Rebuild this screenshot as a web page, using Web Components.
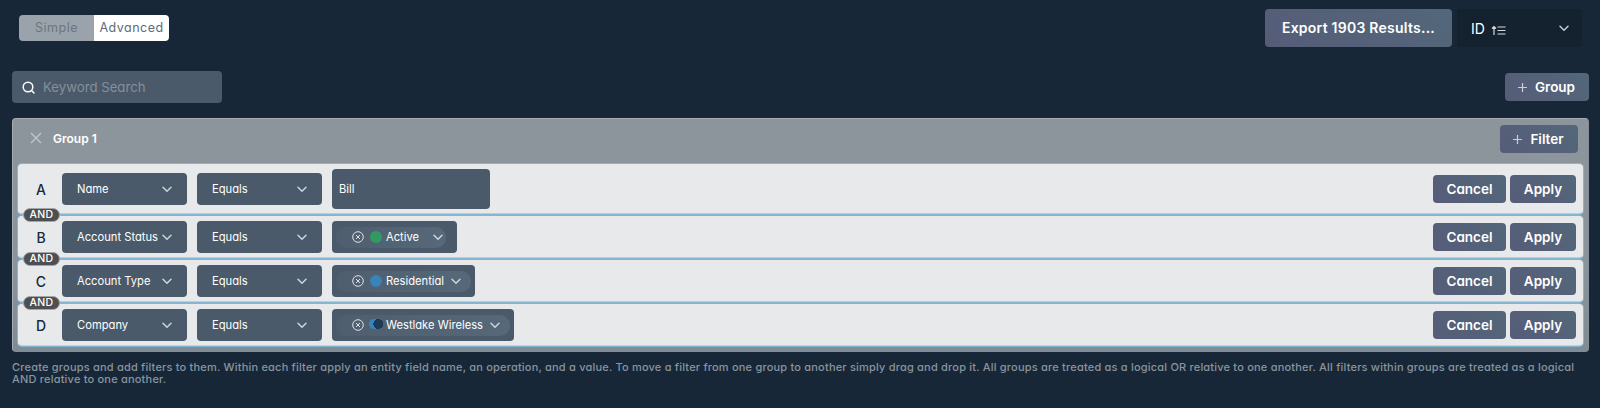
<!DOCTYPE html>
<html><head><meta charset="utf-8"><style>
html,body{margin:0;height:408px;overflow:hidden;background:#172738}
body{font-family:Inter,"Liberation Sans",sans-serif;font-feature-settings:"cv11";color:#fff}
</style></head><body>
<app-shell>
  <div slot="top-left"><mode-toggle></mode-toggle></div>
  <top-actions slot="top-right"></top-actions>
  <search-box slot="search-left"></search-box>
  <ui-button slot="search-right" plus h="28" w="84">Group</ui-button>
  <filter-group>
    <filter-row letter="A" field="Name"><plain-value>Bill</plain-value></filter-row>
    <filter-row letter="B" field="Account Status" and><chip-value dot="green" w="125" mr="7" pr="1">Active</chip-value></filter-row>
    <filter-row letter="C" field="Account Type" and><chip-value dot="blue" w="143" mr="0" pr="8">Residential</chip-value></filter-row>
    <filter-row letter="D" field="Company" and><chip-value dot="moon" w="182" mr="0" pr="8">Westlake Wireless</chip-value></filter-row>
  </filter-group>
  <p slot="help">Create groups and add filters to them. Within each filter apply an entity field name, an operation, and a value. To move a filter from one group to another simply drag and drop it. All groups are treated as a logical OR relative to one another. All filters within groups are treated as a logical AND relative to one another.</p>
</app-shell>
<script>
const chev=(c='#fff',s=14)=>`<svg width="${s}" height="${s}" viewBox="0 0 14 14" fill="none" stroke="${c}" stroke-width="1.5" stroke-linecap="round" stroke-linejoin="round"><path d="M3 5.200l4 4 4-4"/></svg>`;
function def(name,fn){customElements.define(name,class extends HTMLElement{connectedCallback(){if(this.shadowRoot)return;const r=this.attachShadow({mode:'open'});r.innerHTML=fn(this)}})}
def('app-shell',()=>`<style>:host{display:flex;flex-direction:column;padding:9px 11px 0 12px;box-sizing:border-box;height:408px}
.top{display:flex;justify-content:space-between;height:38px;padding-left:7px}
.mid{display:flex;justify-content:space-between;align-items:center;margin-top:24px;height:32px}
.help ::slotted(p){margin:0;font-size:11px;line-height:12px;color:#8a949d;letter-spacing:.2px;font-weight:500}
.help{margin-top:9px;}
.group{margin-top:15px}</style>
<div class="top"><slot name="top-left"></slot><slot name="top-right"></slot></div>
<div class="mid"><slot name="search-left"></slot><slot name="search-right"></slot></div>
<div class="group"><slot></slot></div>
<div class="help"><slot name="help"></slot></div>`);
def('mode-toggle',()=>`<style>:host{display:flex;margin-top:6px;height:26px;width:150px;border-radius:4px;overflow:hidden;font-size:12.5px;letter-spacing:.5px;line-height:25px;text-align:center}
.a{flex:1;background:#9aa3ab;color:#6c7680}.b{flex:1;background:#fff;color:#5c6b7c}</style>
<div class="a">Simple</div><div class="b">Advanced</div>`);
def('top-actions',()=>`<style>:host{display:flex;gap:5px;margin-right:7px}
.e{width:187px;height:38px;border-radius:4px;background:linear-gradient(45deg,#565c78,#53677a);font-weight:600;font-size:14px;line-height:37px;text-align:center;letter-spacing:.24px}
.s{width:125px;height:38px;border-radius:4px;background:#14212e;display:flex;align-items:center;padding:0 11px 0 14px;box-sizing:border-box;font-size:14px}
.s svg.o{margin-left:6px;margin-top:3px}.s .c{margin-left:auto;display:flex}</style>
<div class="e">Export 1903 Results...</div>
<div class="s"><span>ID</span><svg class="o" width="15" height="12" viewBox="0 0 15 12" fill="none" stroke="#d5d9dd" stroke-width="1.200"><path d="M3 11V3M1 4.500L3 2.500 5 4.500M6.500 3h8M6.500 6.500h8M6.500 10h8"/></svg><span class="c">${chev('#c5ccd2')}</span></div>`);
def('search-box',()=>`<style>:host{display:flex;align-items:center;width:210px;height:32px;border-radius:4px;background:#4a5a6a;box-sizing:border-box;padding-left:10px;gap:8px;font-size:13.2px;color:#868f99}</style>
<svg width="13" height="13" viewBox="0 0 13 13" fill="none" stroke="#fff" stroke-width="1.500" stroke-linecap="round"><circle cx="6" cy="6" r="4.800"/><path d="M9.500 9.500L12 12"/></svg><span>Keyword Search</span>`);
def('ui-button',el=>{const h=el.getAttribute('h')||28,w=el.getAttribute('w');const p=el.hasAttribute('plus');return `<style>:host{display:flex;align-items:center;justify-content:center;gap:7px;height:${h}px;width:${w}px;box-sizing:border-box;padding-right:${p?2:0}px;border-radius:4px;background:linear-gradient(45deg,#565c78,#53677a);font-weight:600;font-size:13.500px;color:#fff;flex:none}</style>
${p?'<svg width="11" height="11" viewBox="0 0 11 11" stroke="#ccd0d6" stroke-width="1.200"><path d="M5.500 1v9M1 5.500h9"/></svg>':''}<slot></slot>`});
def('filter-group',()=>`<style>:host{display:block;height:234px;box-sizing:border-box;border-radius:4px;background:linear-gradient(#8d959c 0,#8d959c 30px,#8b949b 60%,#7f8b95);border:1px solid #a5acb2;border-bottom-color:#858d95;border-right-color:#858d95;padding:0 5px}
.h{display:flex;align-items:center;height:40px;margin-bottom:5px;font-weight:600;font-size:12px;padding-left:12px}
.h span{margin-left:11px;margin-top:-2px}.h svg{margin-top:-2px}.h ui-button{margin-left:auto;margin-right:5px}.rows{display:flex;flex-direction:column;gap:2px}</style>
<div class="h"><svg width="12" height="12" viewBox="0 0 12 12" stroke="#c2c7cc" stroke-width="1.200"><path d="M1 1l10 10M11 1L1 11"/></svg><span>Group 1</span><ui-button plus h="28" w="78">Filter</ui-button></div>
<div class="rows"><slot></slot></div>`);
def('select-box',el=>`<style>:host{display:flex;align-items:center;width:125px;height:32px;box-sizing:border-box;border-radius:4px;background:#4a5a6a;padding:0 13px 0 15px;font-size:11.200px;font-weight:400;color:#fff;flex:none;white-space:nowrap}.c{margin-left:auto;display:flex}</style><slot></slot><span class="c">${chev('#d0d5da')}</span>`);
def('filter-row',el=>`<style>:host{display:flex;position:relative;align-items:center;background:#e8e9eb;border-radius:4px;border:1px solid #e8e9eb;border-bottom-color:#b5d0e0;box-shadow:0 0 0 1px #84b6d3;padding:4px 6px 4px 0;flex:none}
.l{width:44px;text-align:center;color:#17293a;font-size:14px;font-weight:500;flex:none;margin-right:-1px}
.ms{display:flex;gap:10px;margin-right:10px}
.a{margin-left:auto;display:flex;gap:4px}
.and{position:absolute;left:4px;top:-9px;width:37px;height:14px;border-radius:7px;background:#4e4f50;border:1px solid #a3a5a8;box-sizing:border-box;font-size:10.500px;font-weight:500;line-height:12px;text-align:center;letter-spacing:.4px;color:#fff}</style>
<div class="l">${el.getAttribute('letter')}</div><div class="ms"><select-box>${el.getAttribute('field')}</select-box><select-box>Equals</select-box></div><slot></slot>
<div class="a"><ui-button h="28" w="73">Cancel</ui-button><ui-button h="28" w="66">Apply</ui-button></div>${el.hasAttribute('and')?'<div class="and">AND</div>':''}`);
def('plain-value',()=>`<style>:host{display:flex;align-items:center;width:158px;height:40px;box-sizing:border-box;padding-left:7px;background:#4a5a6a;border-radius:4px;font-size:11.200px;font-weight:400}</style><slot></slot>`);
def('chip-value',el=>{const d=el.getAttribute('dot');const moon=d=='moon';const dot=moon?'width:15px;margin:-3px 2px 0 5px;background:radial-gradient(circle 5px at 9.3px 6px,#1e3a56 97%,transparent),radial-gradient(circle 5.5px at 5.5px 6px,#3b82b8 97%,transparent)':`border-radius:50%;width:12px;margin:-1px 4px 0 6px;background:${d=='green'?'#2f9b63':'#3b82b8'}`;return `<style>:host{display:flex;align-items:center;width:${el.getAttribute('w')}px;height:32px;box-sizing:border-box;padding:0 4px;background:#4a5a6a;border-radius:4px;font-size:11.200px;font-weight:400;flex:none}
.c{display:flex;align-items:center;height:21px;width:100%;border-radius:10px;background:linear-gradient(90deg,#4e5e6e,#566879);padding:0 ${el.getAttribute('pr')}px 0 16px;box-sizing:border-box;margin-right:${el.getAttribute('mr')}px}
.d{height:12px;${dot};flex:none}.t{margin-top:-1px;white-space:nowrap}.r{margin-left:auto;display:flex}</style>
<div class="c"><svg width="12" height="12" viewBox="0 0 12 12" fill="none" stroke="#dfe2e5" stroke-width="1"><circle cx="6" cy="6" r="5.300"/><path d="M4 4l4 4M8 4l-4 4"/></svg><span class="d"></span><span class="t"><slot></slot></span><span class="r">${chev('#d0d5da')}</span></div>`});
</script></body></html>
